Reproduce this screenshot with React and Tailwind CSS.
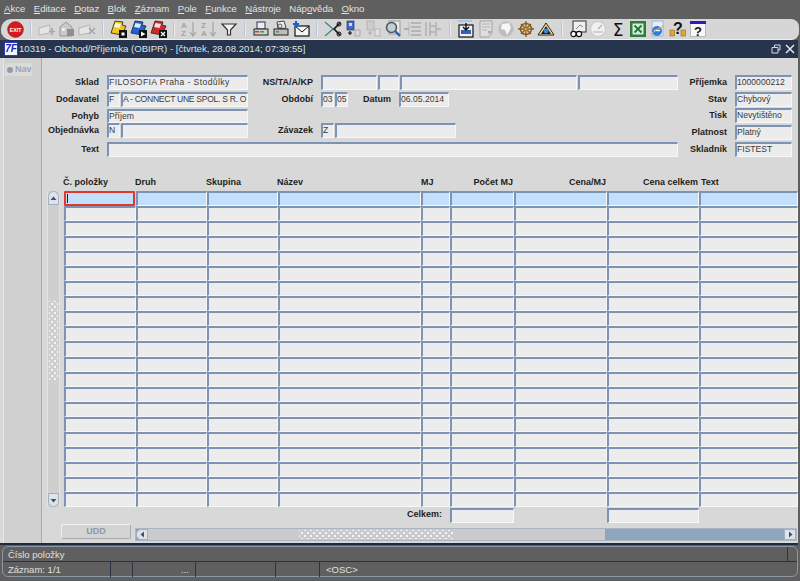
import React from 'react';

const font = { fontFamily: '"Liberation Sans", Arial, sans-serif' };

const menu = [
  ['', 'A', 'kce'],
  ['', 'E', 'ditace'],
  ['', 'D', 'otaz'],
  ['', 'B', 'lok'],
  ['', 'Z', 'áznam'],
  ['', 'P', 'ole'],
  ['', 'F', 'unkce'],
  ['', 'N', 'ástroje'],
  ['Náp', 'o', 'věda'],
  ['', 'O', 'kno'],
];

const Ico = ({ children }) => (
  <svg width="18" height="18" viewBox="0 0 18 18" className="shrink-0">{children}</svg>
);

const Sep = ({ w }) => (
  <div className={`flex justify-center ${w}`}>
    <div className="w-[2px] h-[14px] bg-[#b4c4da] border-r border-[#ececec]" />
  </div>
);

const Folder = ({ fill, mark }) => (
  <Ico>
    <path d="M1 13 L5 1 L13 2 L12 5 L16 6 L12 15 Z" fill={fill} stroke="#222" strokeWidth="0.8" />
    <path d="M5.5 3 L11 4 L9.5 8 L4 7 Z" fill="#fff" opacity="0.85" />
    <rect x="9" y="10" width="8" height="8" fill="#111" />
    {mark}
  </Ico>
);

const icons = [
  <svg key="exit" width="17" height="17" viewBox="0 0 20 20" className="shrink-0">
    <circle cx="10" cy="10" r="9.2" fill="#d9191f" stroke="#8a1014" strokeWidth="0.8" />
    <text x="10" y="12.4" textAnchor="middle" fontSize="6.2" fontWeight="700" fill="#fff" fontFamily="Liberation Sans">EXIT</text>
  </svg>,
  'sep12',
  <Ico key="a1"><path d="M1 8 L12 5 V13 L1 15 Z" fill="#e4e4e4" stroke="#b5b5b5" /><path d="M14 8 V15 M11 11.5 H17" stroke="#a8a8a8" strokeWidth="1.6" /></Ico>,
  <Ico key="a2"><path d="M2 16 V7 L8 2 L14 7 V16 Z" fill="#c9c9c9" stroke="#979797" /><rect x="9" y="9" width="7" height="7" fill="#8f8f8f" /><rect x="4" y="8" width="3" height="3" fill="#eee" /></Ico>,
  <Ico key="a3"><path d="M1 8 L12 5 V13 L1 15 Z" fill="#e4e4e4" stroke="#b5b5b5" /><path d="M11 8 L17 14 M17 8 L11 14" stroke="#a8a8a8" strokeWidth="1.5" /></Ico>,
  'sep12',
  <Folder key="f1" fill="#f1c61d" mark={<rect x="11.5" y="12.5" width="3" height="3" fill="#fff" />} />,
  <Folder key="f2" fill="#1f63d6" mark={<path d="M11 11.5 L15.5 14 L11 16.5 Z" fill="#fff" />} />,
  <Folder key="f3" fill="#d12a2a" mark={<path d="M11 12 L15 16 M15 12 L11 16" stroke="#fff" strokeWidth="1.2" />} />,
  'sep10',
  <Ico key="s1"><text x="1" y="8" fontSize="8" fill="#a3a3a3" fontFamily="Liberation Sans" fontWeight="700">A</text><text x="1" y="16" fontSize="8" fill="#a3a3a3" fontFamily="Liberation Sans" fontWeight="700">Z</text><path d="M13 2 V15 M10 12 L13 16 L16 12" fill="none" stroke="#a3a3a3" strokeWidth="1.2" /></Ico>,
  <Ico key="s2"><text x="1" y="8" fontSize="8" fill="#a3a3a3" fontFamily="Liberation Sans" fontWeight="700">Z</text><text x="1" y="16" fontSize="8" fill="#a3a3a3" fontFamily="Liberation Sans" fontWeight="700">A</text><path d="M13 2 V15 M10 12 L13 16 L16 12" fill="none" stroke="#a3a3a3" strokeWidth="1.2" /></Ico>,
  <Ico key="filter"><path d="M2 4 H16 L10.5 10 V15 H7.5 V10 Z" fill="#f3f3f3" stroke="#333" strokeWidth="1.2" /></Ico>,
  'sep12',
  <Ico key="p1"><rect x="5" y="2" width="8" height="7" fill="#e8eefb" stroke="#334" /><rect x="2" y="9" width="14" height="6" fill="#cfcfcf" stroke="#222" /><rect x="3" y="11" width="4" height="1.5" fill="#d33" /><rect x="8" y="11" width="4" height="1.5" fill="#3a3" /></Ico>,
  <Ico key="p2"><path d="M5 2 L12 1 L14 8 L6 9 Z" fill="#eee" stroke="#444" /><rect x="2" y="9" width="14" height="6" fill="#bdbdbd" stroke="#222" /><circle cx="8" cy="6" r="2" fill="none" stroke="#555" /><rect x="4" y="11" width="3" height="1.5" fill="#3a3" /></Ico>,
  <Ico key="mail"><rect x="3" y="6" width="14" height="10" fill="#f5f5f5" stroke="#111" strokeWidth="1.2" /><path d="M3 6 L10 12 L17 6" fill="none" stroke="#111" /><path d="M1 4 H7 M4 1 V7" stroke="#0f63d6" strokeWidth="2" /></Ico>,
  'sep12',
  <Ico key="cut"><path d="M1 2 L9 9 L1 16" fill="none" stroke="#3f8a8f" strokeWidth="1.4" /><path d="M16 3 L10 9 L16 15" fill="none" stroke="#111" strokeWidth="1.6" /><circle cx="15" cy="4" r="2" fill="none" stroke="#111" /><circle cx="15" cy="14" r="2" fill="none" stroke="#111" /></Ico>,
  <Ico key="copy"><rect x="3" y="1" width="7" height="9" fill="#3b6bd8" stroke="#223" strokeWidth="0.6" /><rect x="5" y="3" width="3" height="3" fill="#dde" /><path d="M6 11 V15 M4 13 H8" stroke="#111" strokeWidth="1.2" /><rect x="11" y="10" width="5" height="6" fill="#d8d8d8" stroke="#aaa" /></Ico>,
  <Ico key="paste"><rect x="3" y="1" width="7" height="9" fill="#ccc" stroke="#b5b5b5" /><path d="M6 11 V15 M4 13 H8" stroke="#b0b0b0" strokeWidth="1.2" /><rect x="11" y="9" width="5" height="7" fill="#e2e2e2" stroke="#b5b5b5" /></Ico>,
  <Ico key="find"><rect x="5" y="1" width="11" height="13" fill="#e8e8e8" stroke="#999" /><circle cx="7.5" cy="7.5" r="5" fill="#bcd0d6" stroke="#555" strokeWidth="1.5" /><path d="M11 11 L16 16" stroke="#2a5fb8" strokeWidth="2.4" /></Ico>,
  <Ico key="l1"><path d="M7 3 H17 M7 7 H17 M7 11 H17 M7 15 H17" stroke="#ababab" strokeWidth="1.4" /><path d="M5 2 V16" stroke="#bbb" /><path d="M0 9 H5" stroke="#a3a3a3" strokeWidth="1.6" /></Ico>,
  <Ico key="l2"><path d="M2 2 V16 M6 2 V16 M12 2 V16" stroke="#aeaeae" strokeWidth="1.4" /><path d="M6 6 H11 M6 12 H11 M12 9 H17" stroke="#aeaeae" strokeWidth="1.6" /></Ico>,
  'sep13',
  <Ico key="t1"><rect x="2" y="5" width="14" height="12" fill="#f1f1f1" stroke="#111" strokeWidth="1.2" /><path d="M1 1 H15" stroke="#93bfe8" strokeWidth="1.4" /><rect x="4" y="10" width="10" height="4" fill="#2f62b8" /><path d="M9 3 V10 M6 7 L9 10 L12 7" fill="none" stroke="#111" strokeWidth="1.4" /></Ico>,
  <Ico key="t2"><path d="M3 1 H15 V13 L12 17 H3 Z" fill="#dedede" stroke="#a3a3a3" /><path d="M5 4 H13 M5 7 H13 M5 10 H10" stroke="#b3b3b3" /><path d="M11 11 H15 L12 15 Z" fill="#aaa" /></Ico>,
  <Ico key="globe"><circle cx="9" cy="9" r="7.5" fill="#bdbdbd" stroke="#c8c8c8" /><path d="M5 4 L12 3 L14 8 L10 15 L8 10 L4 9 Z" fill="#f7f7f7" /></Ico>,
  <Ico key="wheel"><circle cx="9" cy="9" r="5.5" fill="none" stroke="#8a5a17" strokeWidth="1.5" /><path d="M9 1 V17 M1 9 H17 M4 4 L14 14 M14 4 L4 14" stroke="#8a5a17" strokeWidth="1.3" /><circle cx="9" cy="9" r="1.6" fill="#d9a04a" /></Ico>,
  <Ico key="tri"><path d="M1 15 L9 3 L17 15 Z" fill="#f5e08a" stroke="#222" strokeWidth="1" /><path d="M4 14 L9 6 L14 14 Z" fill="#17163f" /><circle cx="9" cy="11" r="2.4" fill="#2f8ae0" /></Ico>,
  'sep12',
  <Ico key="b1"><rect x="4" y="1" width="13" height="11" fill="#efefef" stroke="#333" /><path d="M7 9 L11 5 L14 7" fill="none" stroke="#888" /><circle cx="4.5" cy="14" r="2.6" fill="#fff" stroke="#111" strokeWidth="1.2" /><circle cx="10" cy="14" r="2.6" fill="#fff" stroke="#111" strokeWidth="1.2" /></Ico>,
  <Ico key="b2"><circle cx="9" cy="9" r="7.5" fill="#f0f0f0" stroke="#c4c4c4" /><path d="M4 12 H14 M9 9 L13 5" stroke="#b0b0b0" strokeWidth="1.2" /></Ico>,
  <Ico key="sum"><text x="9" y="15.5" textAnchor="middle" fontSize="17" fill="#111" fontFamily="DejaVu Sans">Σ</text></Ico>,
  <Ico key="xls"><rect x="1" y="1" width="16" height="16" fill="#2f7d3c" /><rect x="3.5" y="3.5" width="11" height="11" fill="#d9ecd9" /><path d="M5.5 5.5 L12.5 12.5 M12.5 5.5 L5.5 12.5" stroke="#1c7a2c" strokeWidth="1.8" /></Ico>,
  <Ico key="ie"><rect x="3" y="1" width="11" height="15" fill="#e7edf7" stroke="#9fb4d6" /><circle cx="8" cy="11" r="5" fill="#2d7fd8" /><path d="M5 10.5 H11" stroke="#fff" strokeWidth="1.4" /><path d="M2 14 Q8 8 15 6" fill="none" stroke="#e2b13c" /></Ico>,
  <Ico key="help1"><rect x="1" y="10" width="4.5" height="6" fill="#e0a92d" stroke="#8a6a1b" strokeWidth="0.6" /><rect x="12" y="10" width="4.5" height="6" fill="#e0a92d" stroke="#8a6a1b" strokeWidth="0.6" /><text x="9" y="14" textAnchor="middle" fontSize="16" fontWeight="700" fill="#111" fontFamily="Liberation Sans">?</text></Ico>,
  <Ico key="help2"><rect x="1.5" y="1.5" width="15" height="15" fill="#f8f8f8" stroke="#999" strokeWidth="0.6" /><rect x="1" y="1" width="16" height="3" fill="#3018c8" /><text x="9" y="15.5" textAnchor="middle" fontSize="13" fontWeight="700" fill="#111" fontFamily="Liberation Sans">?</text></Ico>,
];

const Field = ({ w, children, className = '' }) => (
  <div
    className={`h-full ${w} ${className} shrink-0 bg-[#ececec] border-t-2 border-l-2 border-t-[#7d93b3] border-l-[#7d93b3] border-b border-r border-b-[#f7f7f7] border-r-[#f7f7f7] text-[8.6px] leading-[11px] text-[#3a3a3a] overflow-hidden whitespace-nowrap`}
  >
    {children}
  </div>
);

const Label = ({ w, children }) => (
  <div className={`${w} shrink-0 text-right text-[9px] font-bold text-[#1d1d1d] leading-[15px] whitespace-nowrap`}>
    {children}
  </div>
);

const grid = 'grid grid-cols-[72px_71px_71px_143px_29px_64px_93px_92px_99px]';
const rows = Array.from({ length: 21 }, (_, i) => i);
const cols = Array.from({ length: 9 }, (_, i) => i);

const RightRow = ({ label, value, className }) => (
  <div className={`flex h-[15px] ${className}`}>
    <Label w="w-[39px]">{label}</Label>
    <Field w="w-[57px]" className="ml-[8px]">{value}</Field>
  </div>
);

const Grip = ({ className }) => (
  <div className={`bg-[radial-gradient(#f4f4f4_1px,transparent_1.2px),radial-gradient(#f4f4f4_1px,transparent_1.2px)] bg-[length:6px_6px] bg-[position:0_0,3px_3px] ${className}`} />
);

const ArrowBtn = ({ d, className }) => (
  <div className={`flex items-center justify-center bg-[#dfe3e8] border border-[#9fb0c6] ${className}`}>
    <svg width="7" height="7" viewBox="0 0 7 7"><path d={d} fill="#3d5273" /></svg>
  </div>
);

export default function App() {
  return (
    <div style={font} className="w-[800px] h-[581px] overflow-hidden bg-[#5f5f5f] flex flex-col">
      <div className="h-[19px] flex items-center pl-[4px] gap-[8.4px] text-[9.6px] text-[#e2e2e2]">
        {menu.map(([pre, key, rest]) => (
          <span key={key + rest}>
            {pre}
            <span className="underline">{key}</span>
            {rest}
          </span>
        ))}
      </div>

      <div className="h-[21px] mx-[1px] pl-[4px] flex items-center bg-[#d6d6d6] rounded-l-[10px] rounded-r-[8px] border-b border-[#efefef]">
        {icons.map((ic, i) => {
          if (ic === 'sep10') return <Sep key={i} w="w-[10px]" />;
          if (ic === 'sep12') return <Sep key={i} w="w-[12px]" />;
          if (ic === 'sep13') return <Sep key={i} w="w-[13px]" />;
          return (
            <div key={i} className="w-[20px] flex justify-center">
              {ic}
            </div>
          );
        })}
      </div>

      <div className="h-[18px] w-[798px] bg-[#26354d] flex items-center text-[#dfe3e8] text-[9.6px]">
        <div className="ml-[4px] mr-[1px] w-[14px] h-[14px] bg-[#f4f6ff] border border-[#2a39c8] flex items-center justify-center">
          <span className="text-[#1d28b8] text-[10px] font-bold italic leading-none">7F</span>
        </div>
        <span className="grow">10319 - Obchod/Příjemka (OBIPR) - [čtvrtek, 28.08.2014; 07:39:55]</span>
        <svg width="10" height="10" viewBox="0 0 10 10" className="mr-[4px]">
          <path d="M3.5 3 V1 H9 V6 H7 M1 3.5 H7 V9 H1 Z" fill="none" stroke="#d5dae2" />
        </svg>
        <svg width="10" height="10" viewBox="0 0 10 10" className="mr-[3px]">
          <path d="M1 1 L9 9 M9 1 L1 9" stroke="#e5e8ee" strokeWidth="1.5" />
        </svg>
      </div>

      <div className="h-[487px] w-[798px] flex bg-[#d8d8d8] border-b-2 border-[#1f2a3c]">
        <div className="w-[42px] shrink-0 pl-[3px]">
          <div className="h-full bg-[#d0d0d0] border-l border-[#e6e6e6] border-r border-r-[#ababab] pt-[5px]">
            <div className="h-[13px] w-[27px] ml-[1px] flex items-center gap-[2px] pl-[2px] bg-[#dadada] text-[9px] font-bold text-[#9aa6b6]">
              <span className="w-[6px] h-[6px] rounded-full bg-[#8e9bad]" />
              Nav
            </div>
          </div>
        </div>

        <div className="grow flex flex-col min-w-0">
          {/* hlavička dokladu */}
          <div className="flex pt-[17px]">
            <div className="w-[636px] shrink-0 flex flex-col">
              <div className="flex h-[15px]">
                <Label w="w-[57px]">Sklad</Label>
                <Field w="w-[141px]" className="ml-[8px] tracking-[0.4px]">FILOSOFIA Praha - Stodůlky</Field>
                <Label w="w-[65px]">NS/TA/A/KP</Label>
                <Field w="w-[56px]" className="ml-[8px]" />
                <Field w="w-[21px]" className="ml-[1px]" />
                <Field w="w-[177px]" className="ml-[1px]" />
                <Field w="w-[100px]" className="ml-[1px]" />
              </div>
              <div className="flex h-[15px] mt-[2px]">
                <Label w="w-[57px]">Dodavatel</Label>
                <Field w="w-[13px]" className="ml-[8px]">F</Field>
                <Field w="w-[127px]" className="ml-[1px] tracking-[-0.3px]">A - CONNECT UNE SPOL. S R. O</Field>
                <Label w="w-[65px]">Období</Label>
                <Field w="w-[13px]" className="ml-[8px]">03</Field>
                <Field w="w-[13px]" className="ml-[1px]">05</Field>
                <Label w="w-[43px]">Datum</Label>
                <Field w="w-[50px]" className="ml-[8px]">06.05.2014</Field>
              </div>
              <div className="flex h-[14px] mt-[2px]">
                <Label w="w-[57px]">Pohyb</Label>
                <Field w="w-[141px]" className="ml-[8px]">Příjem</Field>
              </div>
              <div className="flex h-[15px]">
                <Label w="w-[57px]">Objednávka</Label>
                <Field w="w-[13px]" className="ml-[8px]">N</Field>
                <Field w="w-[127px]" className="ml-[1px]" />
                <Label w="w-[65px]">Závazek</Label>
                <Field w="w-[13px]" className="ml-[8px]">Z</Field>
                <Field w="w-[121px]" className="ml-[1px]" />
              </div>
              <div className="flex h-[15px] mt-[4px]">
                <Label w="w-[57px]">Text</Label>
                <Field w="w-[571px]" className="ml-[8px]" />
              </div>
            </div>
            <div className="ml-[10px] flex flex-col">
              <RightRow label="Příjemka" value="1000000212" />
              <RightRow label="Stav" value="Chybový" className="mt-[2px]" />
              <RightRow label="Tisk" value="Nevytištěno" className="mt-[1px]" />
              <RightRow label="Platnost" value="Platný" className="mt-[2px]" />
              <RightRow label="Skladník" value="FISTEST" className="mt-[2px]" />
            </div>
          </div>

          {/* záhlaví tabulky */}
          <div className={`${grid} ml-[22px] mt-[19px] h-[15px] text-[9px] font-bold text-[#1d1d1d] leading-[13px]`}>
            <div className="-ml-[1px]">Č. položky</div>
            <div className="-ml-[1px]">Druh</div>
            <div className="-ml-[1px]">Skupina</div>
            <div className="-ml-[1px]">Název</div>
            <div className="text-left">MJ</div>
            <div className="text-right pr-[1px]">Počet MJ</div>
            <div className="text-right pr-[1px]">Cena/MJ</div>
            <div className="text-right pr-[1px]">Cena celkem</div>
            <div className="pl-[2px]">Text</div>
          </div>

          <div className="flex h-[316px]">
            <div className="ml-[5px] mr-[4px] w-[13px] shrink-0 flex flex-col bg-[#cfcfcf] border-x border-[#e2e2e2]">
              <ArrowBtn d="M3.5 1.5 L6.5 5 H0.5 Z" className="h-[14px] rounded-t-[6px]" />
              <div className="grow flex flex-col justify-center items-center pb-[16px]">
                <Grip className="h-[80px] w-[9px]" />
              </div>
              <ArrowBtn d="M3.5 5.5 L6.5 2 H0.5 Z" className="h-[14px] rounded-b-[6px]" />
            </div>
            <div className="grow grid grid-rows-[repeat(21,minmax(0,1fr))]">
              {rows.map((r) => (
                <div key={r} className={grid}>
                  {cols.map((c) => {
                    if (r === 0 && c === 0) {
                      return (
                        <div key={c} className="bg-[#c2dffb] border-2 border-[#e2362e] rounded-[1px] pl-[1px] py-[1px] mr-[1px]">
                          <div className="w-[1px] h-full bg-[#222]" />
                        </div>
                      );
                    }
                    return (
                      <div
                        key={c}
                        className={`border-t-2 border-l-2 border-t-[#7d93b3] border-l-[#7d93b3] border-b border-r border-b-[#f7f7f7] border-r-[#f7f7f7] ${r === 0 ? 'bg-[#c2dffb]' : 'bg-[#ececec]'}`}
                      />
                    );
                  })}
                </div>
              ))}
            </div>
          </div>

          {/* součty */}
          <div className={`${grid} ml-[22px] h-[15px] mt-[1px]`}>
            <div className="col-span-5 text-right text-[9px] font-bold text-[#1d1d1d] leading-[13px] pr-[8px]">Celkem:</div>
            <Field w="w-full" />
            <div />
            <Field w="w-full" />
          </div>

          <div className="flex mt-[1px] h-[18px]">
            <div className="ml-[19px] w-[70px] h-[15px] bg-[#d4d4d4] border border-[#f0f0f0] border-b-[#a9a9a9] border-r-[#a9a9a9] rounded-[2px] text-center text-[9px] font-bold leading-[13px] text-[#8e99a6]">
              UDD
            </div>
            <div className="ml-[4px] mt-[4px] w-[662px] h-[13px] flex border border-[#a8b6c6] bg-[#8fa5bd]">
              <ArrowBtn d="M1.5 3.5 L5 0.5 V6.5 Z" className="w-[12px] rounded-l-[5px]" />
              <div className="w-[457px] bg-[#cbcbcb] flex items-center justify-center">
                <Grip className="w-[155px] h-[9px]" />
              </div>
              <div className="grow" />
              <ArrowBtn d="M5.5 3.5 L2 0.5 V6.5 Z" className="w-[12px]" />
            </div>
          </div>
        </div>
      </div>

      <div className="mt-[1px] mx-[2px] h-[31px] border border-[#8d98a6] rounded-[6px] flex flex-col text-[9.5px] text-[#e0e0e0]">
        <div className="h-[15px] pl-[5px] leading-[15px] border-b border-[#2a3342] flex">
          <span className="grow">Číslo položky</span>
          <div className="w-[1px] bg-[#2a3342] mr-[9px]" />
        </div>
        <div className="grow flex leading-[15px]">
          <div className="w-[108px] pl-[5px] border-r border-[#2a3342]">Záznam: 1/1</div>
          <div className="w-[22px] border-r border-[#2a3342]" />
          <div className="w-[63px] border-r border-[#2a3342] text-right pr-[6px]">...</div>
          <div className="w-[80px] border-r border-[#2a3342]" />
          <div className="w-[44px] border-r border-[#2a3342]" />
          <div className="pl-[6px]">&lt;OSC&gt;</div>
        </div>
      </div>
    </div>
  );
}
